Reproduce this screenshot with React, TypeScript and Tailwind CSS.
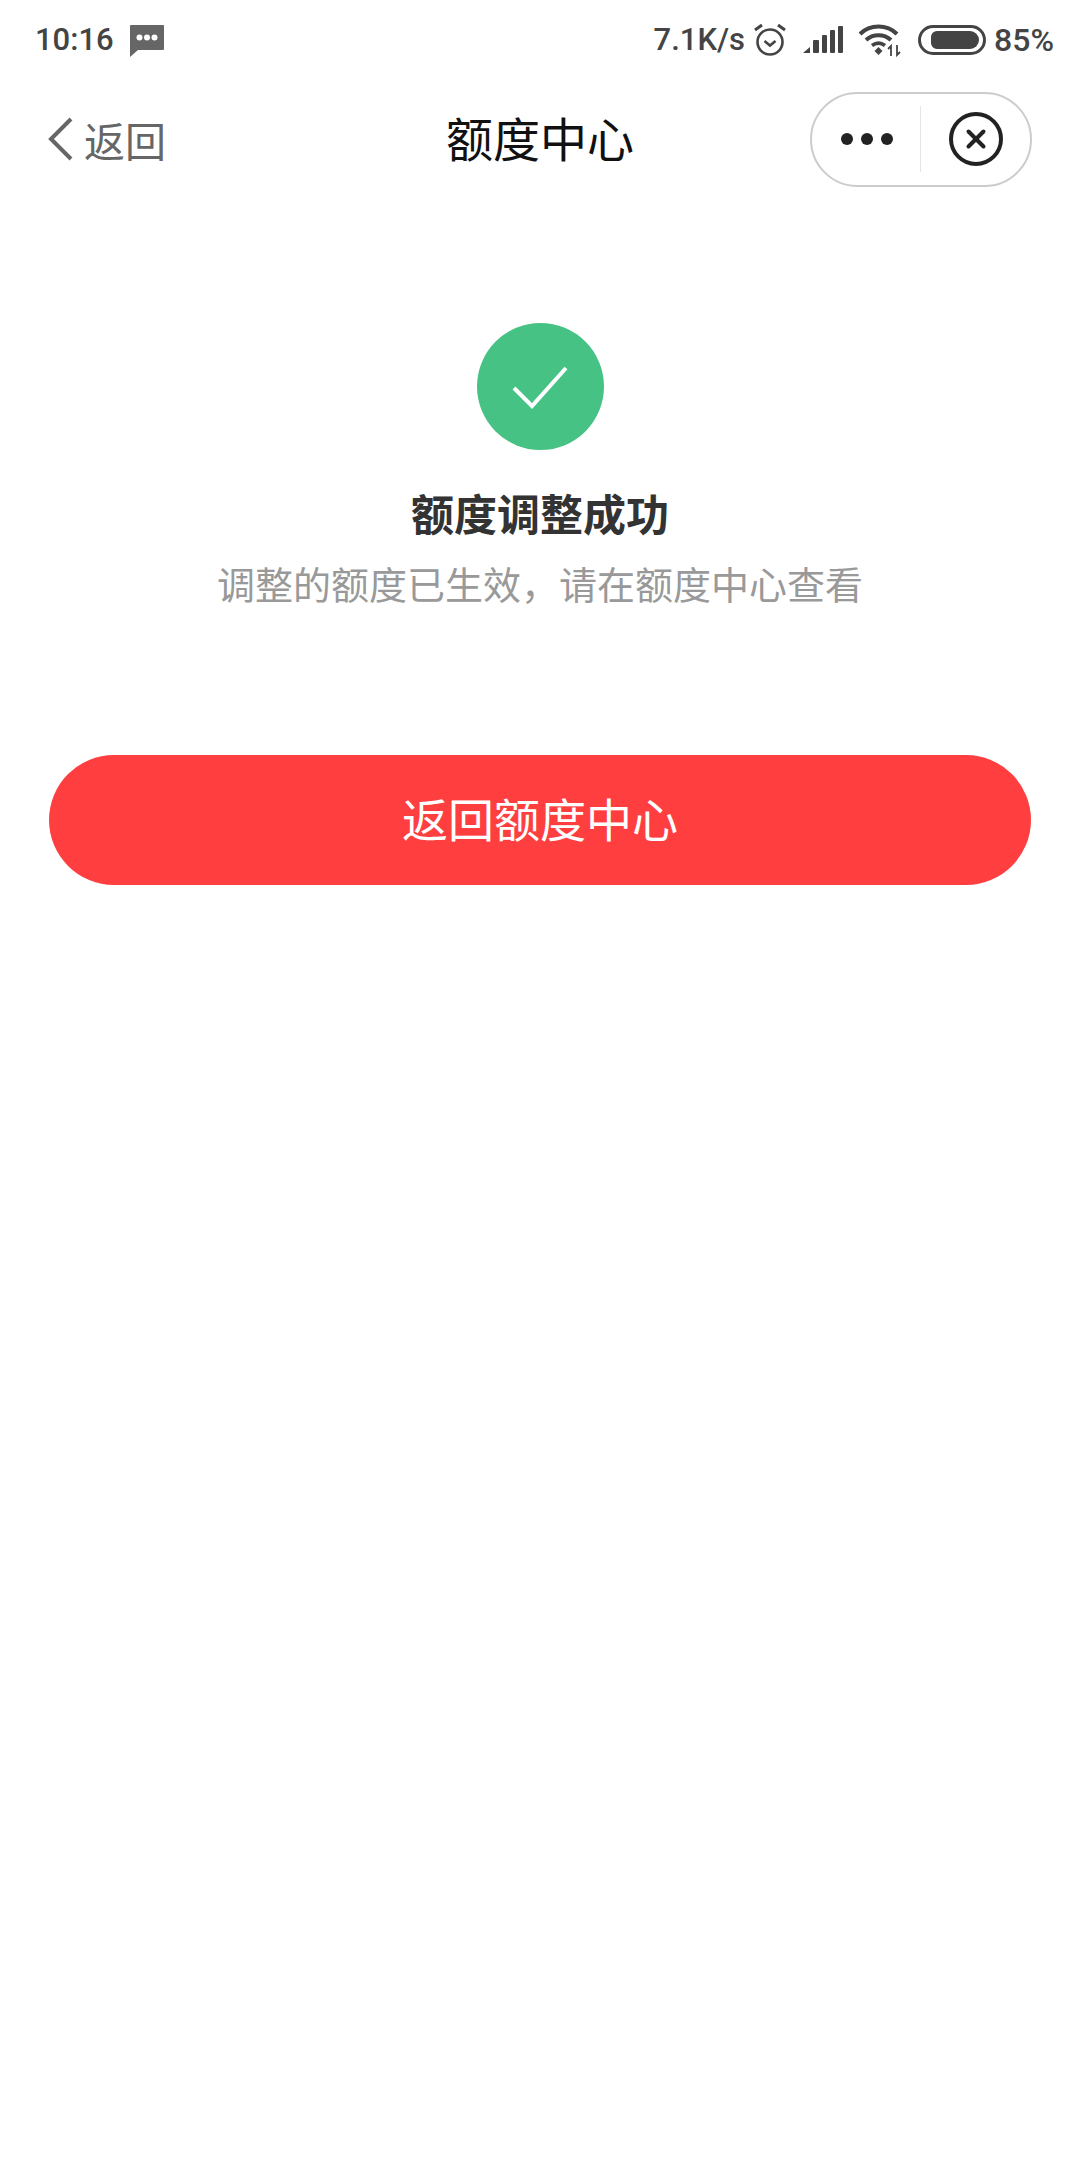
import { X } from 'lucide-react';

const cjk = "font-['Noto_Sans_CJK_SC','Noto_Sans',sans-serif]";

const StatusBar = () => (
  <div className="flex h-[76px] items-center justify-between pl-[35px] pr-[26px] pt-[3px] font-['Roboto','Noto_Sans',sans-serif] text-[#444444]">
    <div className="flex items-center gap-[16px]">
      <span className="text-[31px] font-medium leading-none">10:16</span>
      <svg width="34" height="32" viewBox="0 0 34 32" className="mt-[3px]">
        <path d="M1 0h32a1 1 0 0 1 1 1v23a1 1 0 0 1-1 1H8l-8 7V1a1 1 0 0 1 1-1z" fill="#666666" />
        <circle cx="9.5" cy="12.5" r="3" fill="#fff" />
        <circle cx="17" cy="12.5" r="3" fill="#fff" />
        <circle cx="24.5" cy="12.5" r="3" fill="#fff" />
      </svg>
    </div>
    <div className="flex items-center">
      <span className="text-[31px] font-medium leading-none">7.1K/s</span>
      <svg width="36" height="36" viewBox="0 0 36 36" fill="none" stroke="#444444" className="ml-[7px]">
        <circle cx="18" cy="20" r="12.5" strokeWidth="2.6" />
        <path d="M12.500 19l5.500 4.500 5.500-4.500" strokeWidth="2.6" />
        <path d="M3 8l7-5M33 8l-7-5" strokeWidth="3" />
      </svg>
      <svg width="42" height="30" viewBox="0 0 42 30" fill="#444444" className="ml-[14px]">
        <path d="M1 28l7-6v6z" />
        <rect x="11" y="15" width="6" height="13" rx="1" />
        <rect x="20" y="10" width="5" height="18" rx="1" />
        <rect x="28" y="5" width="5" height="23" rx="1" />
        <rect x="36" y="1" width="5" height="27" rx="1" />
      </svg>
      <svg width="46" height="34" viewBox="0 0 46 34" fill="none" stroke="#444444" className="ml-[14px]">
        <path d="M2 11C12 1 29 1 39 11" strokeWidth="4" />
        <path d="M8 17c7-6.500 18-6.500 25 0" strokeWidth="4" />
        <path d="M14 22.500c4-3 9-3 13 0" strokeWidth="3.6" />
        <path d="M16.500 28l4-4 4 4-4 4z" fill="#444444" stroke="none" />
        <path d="M33 33V23l-3 3M39 22v10l3-3" strokeWidth="1.8" />
      </svg>
      <div className="ml-[14px] flex h-[30px] w-[68px] items-center rounded-full border-[3px] border-[#444444] pl-[10px]">
        <div className="h-[18px] w-[48px] rounded-l-[6px] rounded-r-[9px] bg-[#444444]" />
      </div>
      <span className="ml-[8px] text-[32px] font-medium leading-none">85%</span>
    </div>
  </div>
);

const NavBar = () => (
  <div className="relative mt-[7px] flex h-[112px] items-center justify-between pl-[47px] pr-[48px]">
    <div className={`flex items-center gap-[11px] ${cjk}`}>
      <svg width="26" height="44" viewBox="0 0 26 44" fill="none" stroke="#666666" strokeWidth="4">
        <path d="M24 2L4 22l20 20" />
      </svg>
      <span className="text-[41px] leading-none text-[#666666]">返回</span>
    </div>
    <h1 className={`absolute inset-x-0 top-[30px] text-center text-[47px] font-normal leading-none text-[#111111] ${cjk}`}>
      额度中心
    </h1>
    <div className="relative flex h-[95px] w-[222px] items-center rounded-full border-2 border-[#cccccc] bg-white">
      <div className="flex flex-1 items-center justify-center gap-[8px] pl-[2px]">
        <span className="h-[12px] w-[12px] rounded-full bg-[#222222]" />
        <span className="h-[12px] w-[12px] rounded-full bg-[#222222]" />
        <span className="h-[12px] w-[12px] rounded-full bg-[#222222]" />
      </div>
      <div className="h-[66px] w-px bg-[#e5e5e5]" />
      <div className="flex w-[109px] items-center justify-center">
        <div className="flex h-[54px] w-[54px] items-center justify-center rounded-full border-[4px] border-[#222222]">
          <X size={30} color="#222222" strokeWidth={3.2} />
        </div>
      </div>
    </div>
  </div>
);

export default function App() {
  return (
    <div className={`h-[2160px] w-[1080px] overflow-hidden bg-white ${cjk}`}>
      <StatusBar />
      <NavBar />
      <div className="flex flex-col items-center pt-[128px]">
        <div className="flex h-[127px] w-[127px] items-center justify-center rounded-full bg-[#46c284]">
          <svg width="56" height="44" viewBox="0 0 56 44" fill="none" stroke="#ffffff" strokeWidth="4">
            <path d="M2 23l18 18L54 3" />
          </svg>
        </div>
        <h2 className="mt-[34px] text-[43px] font-bold leading-[56px] text-[#333333]">额度调整成功</h2>
        <p className="mt-[18px] text-[38px] leading-[50px] text-[#999999]">调整的额度已生效，请在额度中心查看</p>
      </div>
      <div className="px-[49px] pt-[147px]">
        <button className="flex h-[130px] w-full items-center justify-center rounded-full bg-[#ff3e40] pb-[5px] text-[46px] text-white">
          返回额度中心
        </button>
      </div>
    </div>
  );
}
